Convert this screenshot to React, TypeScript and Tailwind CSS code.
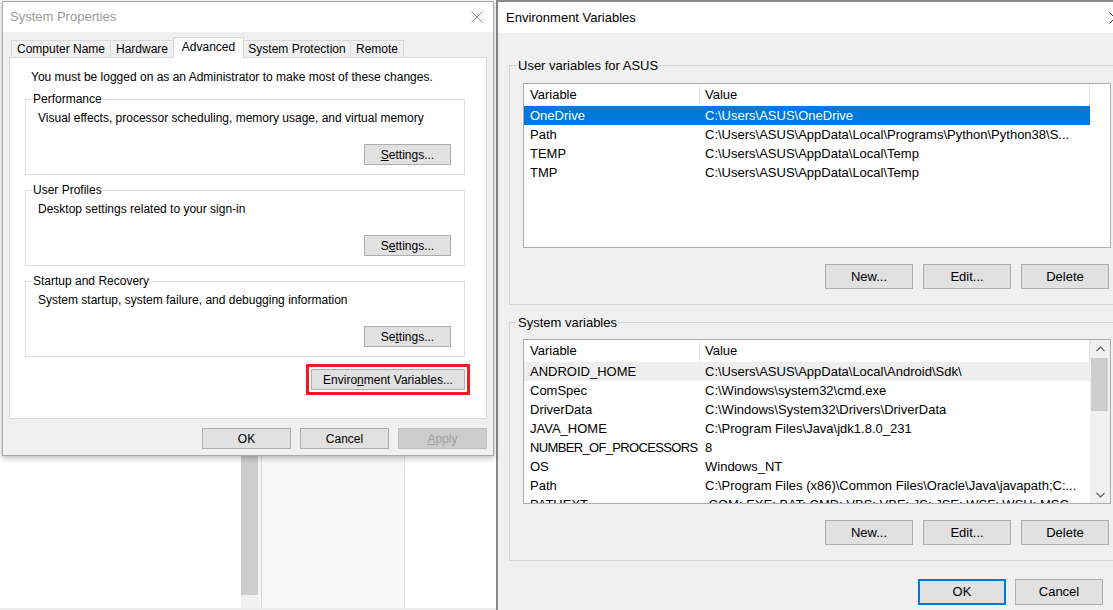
import React from 'react';

const btn = 'flex items-center justify-center border border-[#adadad] bg-[#e1e1e1] text-black';

const CloseX = ({ color }: { color: string }) => (
  <svg width="12" height="12" viewBox="0 0 12 12">
    <path d="M0.5 0.5 L11.5 11.5 M11.5 0.5 L0.5 11.5" stroke={color} strokeWidth="1" fill="none" />
  </svg>
);

const Chevron = ({ up }: { up?: boolean }) => (
  <svg width="9" height="6" viewBox="0 0 9 6">
    <path d={up ? 'M0.5 5 L4.5 1 L8.5 5' : 'M0.5 1 L4.5 5 L8.5 1'} stroke="#606060" strokeWidth="1.2" fill="none" />
  </svg>
);

const tabs = [
  { name: 'Computer Name', w: 'w-[100px]' },
  { name: 'Hardware', w: 'w-[64px]' },
  { name: 'Advanced', w: 'w-[71px]', active: true },
  { name: 'System Protection', w: 'w-[108px]' },
  { name: 'Remote', w: 'w-[54px]' }
];

type GroupProps = { title: string; text: string; label: React.ReactNode; tall?: boolean };

const Group = ({ title, text, label, tall }: GroupProps) => (
  <div className={`relative ml-[15px] w-[440px] ${tall ? 'h-[77px]' : 'h-[76px]'} border border-[#dcdcdc] flex flex-col`}>
    <span className="absolute -top-[8px] left-[6px] bg-white px-[1px] leading-[14px]">{title}</span>
    <p className="pt-[11px] pl-[12px] leading-[14px]">{text}</p>
    <div className={`mt-auto mb-[9px] mr-[13px] self-end w-[87px] h-[21px] ${btn}`}>{label}</div>
  </div>
);

const SystemProperties = () => (
  <div className="relative z-10 ml-[2px] mt-px w-[492px] h-[455px] border border-[#a9a9a9] bg-[#f0f0f0] shadow-[0_2px_6px_rgba(0,0,0,0.28)] flex flex-col text-[12px] text-black">
    <div className="h-[30px] bg-white flex items-center justify-between pl-[7px] pr-[10px]">
      <span className="text-[13px] text-[#9a9a9a]">System Properties</span>
      <CloseX color="#8c8c8c" />
    </div>
    <div className="pl-[6px] pr-[6px] flex flex-col">
      <div className="mt-[5px] h-[20px] pl-[2px] flex items-end">
        {tabs.map((t, i) => (
          <div
            key={t.name}
            className={`${t.w} ${i > 0 ? '-ml-px' : ''} flex items-center justify-center border-x border-t border-[#d9d9d9] ${
              t.active ? 'relative z-10 h-[21px] -mb-px bg-white pb-[2px]' : 'h-[17px] bg-[#f0f0f0]'
            }`}
          >
            {t.name}
          </div>
        ))}
      </div>
      <div className="h-[362px] bg-white border border-[#d9d9d9] flex flex-col">
        <p className="pt-[12px] pl-[21px] leading-[14px]">
          You must be logged on as an Administrator to make most of these changes.
        </p>
        <div className="mt-[15px]">
          <Group
            title="Performance"
            text="Visual effects, processor scheduling, memory usage, and virtual memory"
            label={<span><u>S</u>ettings...</span>}
          />
        </div>
        <div className="mt-[15px]">
          <Group
            title="User Profiles"
            text="Desktop settings related to your sign-in"
            label={<span>S<u>e</u>ttings...</span>}
          />
        </div>
        <div className="mt-[15px]">
          <Group
            title="Startup and Recovery"
            text="System startup, system failure, and debugging information"
            label={<span>Se<u>t</u>tings...</span>}
          />
        </div>
        <div className="mt-[7px] mr-[16px] self-end border-[3px] border-[#ec1c24] p-[2px]">
          <div className={`w-[154px] h-[21px] ${btn}`}>
            <span>
              Enviro<u>n</u>ment Variables...
            </span>
          </div>
        </div>
      </div>
      <div className="mt-[9px] flex justify-end gap-[9px]">
        <div className={`w-[89px] h-[21px] ${btn}`}>OK</div>
        <div className={`w-[89px] h-[21px] ${btn}`}>Cancel</div>
        <div className="w-[89px] h-[21px] flex items-center justify-center border border-[#bfbfbf] bg-[#cccccc] text-[#a0a0a0]">
          <span>
            <u>A</u>pply
          </span>
        </div>
      </div>
    </div>
  </div>
);

const Backdrop = () => (
  <div className="flex-1 flex border-b-2 border-[#ebebeb]">
    <div className="w-[241px] bg-white" />
    <div className="w-[17px] flex flex-col">
      <div className="h-[139px] bg-[#cdcdcd]" />
      <div className="flex-1 bg-[#f0f0f0]" />
    </div>
    <div className="w-[3px] bg-[#f4f4f4]" />
    <div className="w-[143px] bg-[#f7f7f7] border-l border-[#dadada]" />
    <div className="flex-1 bg-white border-l border-[#e2e2e2]" />
  </div>
);

type Row = { name: string; value: string; tight?: boolean };

const userVars: Row[] = [
  { name: 'OneDrive', value: 'C:\\Users\\ASUS\\OneDrive' },
  { name: 'Path', value: 'C:\\Users\\ASUS\\AppData\\Local\\Programs\\Python\\Python38\\S...' },
  { name: 'TEMP', value: 'C:\\Users\\ASUS\\AppData\\Local\\Temp' },
  { name: 'TMP', value: 'C:\\Users\\ASUS\\AppData\\Local\\Temp' }
];

const systemVars: Row[] = [
  { name: 'ANDROID_HOME', value: 'C:\\Users\\ASUS\\AppData\\Local\\Android\\Sdk\\' },
  { name: 'ComSpec', value: 'C:\\Windows\\system32\\cmd.exe' },
  { name: 'DriverData', value: 'C:\\Windows\\System32\\Drivers\\DriverData' },
  { name: 'JAVA_HOME', value: 'C:\\Program Files\\Java\\jdk1.8.0_231' },
  { name: 'NUMBER_OF_PROCESSORS', value: '8', tight: true },
  { name: 'OS', value: 'Windows_NT' },
  { name: 'Path', value: 'C:\\Program Files (x86)\\Common Files\\Oracle\\Java\\javapath;C:...' },
  { name: 'PATHEXT', value: '.COM;.EXE;.BAT;.CMD;.VBS;.VBE;.JS;.JSE;.WSF;.WSH;.MSC' }
];

type ListProps = { rows: Row[]; selected?: number; hovered?: number; scroll?: boolean };

const VarList = ({ rows, selected, hovered, scroll }: ListProps) => (
  <div className="ml-[13px] w-[588px] h-[165px] border border-[#abadb3] bg-white overflow-hidden flex">
    <div className="flex-1 flex flex-col">
      <div className="h-[22px] flex shrink-0">
        <div className="w-[176px] pl-[6px] border-r border-[#e5e5e5] leading-[22px]">Variable</div>
        <div className="w-[390px] pl-[5px] border-r border-[#e5e5e5] leading-[22px]">Value</div>
      </div>
      {rows.map((r, i) => (
        <div
          key={r.name}
          className={`w-[566px] h-[19px] shrink-0 flex leading-[19px] whitespace-nowrap ${
            i === selected ? 'bg-[#0078d7] text-white' : i === hovered ? 'bg-[#eeeeee]' : ''
          }`}
        >
          <div className={`w-[176px] pl-[6px] overflow-hidden ${r.tight ? 'tracking-[-0.65px]' : ''}`}>{r.name}</div>
          <div className="w-[390px] pl-[5px] overflow-hidden">{r.value}</div>
        </div>
      ))}
    </div>
    {scroll && (
      <div className="w-[20px] h-full bg-[#f0f0f0] flex flex-col">
        <div className="h-[17px] flex items-center justify-center">
          <Chevron up />
        </div>
        <div className="mt-px ml-px w-[17px] h-[53px] bg-[#cdcdcd]" />
        <div className="mt-auto h-[17px] flex items-center justify-center">
          <Chevron />
        </div>
      </div>
    )}
  </div>
);

const ListButtons = () => (
  <div className="ml-[13px] w-[588px] mt-[16px] pr-[2px] flex justify-end gap-[10px]">
    <div className={`w-[88px] h-[25px] ${btn}`}>New...</div>
    <div className={`w-[88px] h-[25px] ${btn}`}>Edit...</div>
    <div className={`w-[88px] h-[25px] ${btn}`}>Delete</div>
  </div>
);

const EnvironmentVariables = () => (
  <div className="w-[640px] shrink-0 h-[610px] border-l-2 border-t-2 border-[#8a8a8a] bg-[#f0f0f0] flex flex-col text-[13px] text-black">
    <div className="h-[31px] bg-white flex items-center justify-between pl-[8px] pr-[15px]">
      <span>Environment Variables</span>
      <CloseX color="#333" />
    </div>
    <div className="pl-[11px] pt-[32px] flex flex-col">
      <div className="relative w-[613px] border border-[#d5d5d5] pt-[17px] pb-[15px]">
        <span className="absolute -top-[8px] left-[7px] bg-[#f0f0f0] px-[1px] leading-[15px]">User variables for ASUS</span>
        <VarList rows={userVars} selected={0} />
        <ListButtons />
      </div>
      <div className="relative mt-[17px] w-[613px] border border-[#d5d5d5] pt-[16px] pb-[15px]">
        <span className="absolute -top-[8px] left-[7px] bg-[#f0f0f0] px-[1px] leading-[15px]">System variables</span>
        <VarList rows={systemVars} hovered={0} scroll />
        <ListButtons />
      </div>
    </div>
    <div className="mt-[18px] pr-[33px] flex justify-end gap-[9px]">
      <div className="w-[88px] h-[26px] flex items-center justify-center border border-[#0078d7] bg-[#e1e1e1] shadow-[inset_0_0_0_1px_#0078d7]">
        OK
      </div>
      <div className={`w-[88px] h-[26px] ${btn}`}>Cancel</div>
    </div>
  </div>
);

export default function App() {
  return (
    <div className="w-[1113px] h-[610px] overflow-hidden flex bg-white font-['Liberation_Sans',Arial,sans-serif]">
      <div className="w-[496px] shrink-0 h-full flex flex-col bg-white">
        <SystemProperties />
        <Backdrop />
      </div>
      <EnvironmentVariables />
    </div>
  );
}
